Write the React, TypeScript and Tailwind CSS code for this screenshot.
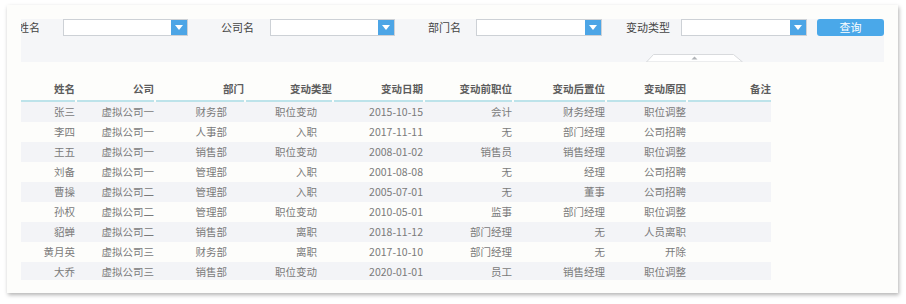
import React from "react"

const font = { fontFamily: '"Noto Sans CJK SC", "Liberation Sans", sans-serif' }

interface Column {
  title: string
  width: string
  bodyPad: string
}

const columns: Column[] = [
  { title: "姓名", width: "w-[56px]", bodyPad: "pr-[2px]" },
  { title: "公司", width: "w-[79px]", bodyPad: "pr-[2px]" },
  { title: "部门", width: "w-[90px]", bodyPad: "pr-[19px]" },
  { title: "变动类型", width: "w-[88px]", bodyPad: "pr-[17px]" },
  { title: "变动日期", width: "w-[91px]", bodyPad: "pr-[2px]" },
  { title: "变动前职位", width: "w-[89px]", bodyPad: "pr-[2px]" },
  { title: "变动后置位", width: "w-[93px]", bodyPad: "pr-[2px]" },
  { title: "变动原因", width: "w-[81px]", bodyPad: "pr-[2px]" },
  { title: "备注", width: "w-[83px]", bodyPad: "pr-0" },
]

const rows = [
  ["张三", "虚拟公司一", "财务部", "职位变动", "2015-10-15", "会计", "财务经理", "职位调整", ""],
  ["李四", "虚拟公司一", "人事部", "入职", "2017-11-11", "无", "部门经理", "公司招聘", ""],
  ["王五", "虚拟公司一", "销售部", "职位变动", "2008-01-02", "销售员", "销售经理", "职位调整", ""],
  ["刘备", "虚拟公司一", "管理部", "入职", "2001-08-08", "无", "经理", "公司招聘", ""],
  ["曹操", "虚拟公司二", "管理部", "入职", "2005-07-01", "无", "董事", "公司招聘", ""],
  ["孙权", "虚拟公司二", "管理部", "职位变动", "2010-05-01", "监事", "部门经理", "职位调整", ""],
  ["貂蝉", "虚拟公司二", "销售部", "离职", "2018-11-12", "部门经理", "无", "人员离职", ""],
  ["黄月英", "虚拟公司三", "财务部", "离职", "2017-10-10", "部门经理", "无", "开除", ""],
  ["大乔", "虚拟公司三", "销售部", "职位变动", "2020-01-01", "员工", "销售经理", "职位调整", ""],
]

function Select({ width }: { width: string }) {
  return (
    <div className={`flex h-[17px] ${width} border border-[#cdd1d6] bg-white`}>
      <div className="flex-1" />
      <div className="flex h-full w-[16px] items-center justify-center bg-[#4ca5e6]">
        <svg width="8" height="5" viewBox="0 0 8 5">
          <path d="M0 0 H8 L4 5 Z" fill="#ffffff" />
        </svg>
      </div>
    </div>
  )
}

export default function App() {
  return (
    <div className="h-[304px] w-[906px] overflow-hidden bg-white pl-[7px] pt-[5px]" style={font}>
      <div className="h-[288px] w-[891px] bg-[#fdfdfb] pl-[14px] pt-[14px] shadow-[1px_2px_4px_rgba(0,0,0,0.3)]">
        {/* filter bar, scrolled so the first label is partly hidden */}
        <div className="relative h-[43px] w-[863px] overflow-hidden bg-[#f5f6f8]">
          <div className="flex h-[17px] items-center text-[11px] text-[#444]">
            <div className="flex w-[42px] shrink-0 justify-end whitespace-nowrap pr-[23px]">姓名</div>
            <Select width="w-[125px]" />
            <div className="ml-[33px] w-[49px] shrink-0">公司名</div>
            <Select width="w-[125px]" />
            <div className="ml-[33px] w-[48px] shrink-0">部门名</div>
            <Select width="w-[126px]" />
            <div className="ml-[24px] w-[55px] shrink-0">变动类型</div>
            <Select width="w-[126px]" />
            <button className="ml-[10px] flex h-[17px] w-[67px] items-center justify-center rounded-[3px] bg-[#4aa8e9] text-[11px] text-white">
              查询
            </button>
          </div>
          <svg className="absolute bottom-0 left-[625px]" width="97" height="8" viewBox="0 0 97 8">
            <path d="M0.5 8 L7.5 0.5 H87.5 L96.5 8 Z" fill="#ffffff" stroke="#d8dadd" />
            <path d="M45.5 5.5 L48.5 2.5 L51.5 5.5 Z" fill="#b0b3b7" />
          </svg>
        </div>

        {/* table */}
        <div className="mt-[16px] w-[750px]">
          <div className="flex">
            {columns.map((col, i) => (
              <div key={col.title} className={`${col.width} shrink-0`}>
                <div
                  className={`flex h-[24px] items-center justify-end border-b-2 border-[#bde3ea] text-[10.5px] font-bold text-[#5c5c5c] ${i < columns.length - 1 ? "mr-[2px]" : ""}`}
                >
                  {col.title}
                </div>
              </div>
            ))}
          </div>
          <div className="h-[178px] overflow-hidden">
            {rows.map((row, r) => (
              <div key={r} className={`flex h-[20px] items-center ${r % 2 === 0 ? "bg-[#f3f4f7]" : ""}`}>
                {row.map((cell, c) => (
                  <div
                    key={c}
                    className={`${columns[c].width} ${columns[c].bodyPad} shrink-0 text-right text-[10.5px] text-[#7a7a7a]`}
                  >
                    {cell}
                  </div>
                ))}
              </div>
            ))}
          </div>
        </div>
      </div>
    </div>
  )
}
